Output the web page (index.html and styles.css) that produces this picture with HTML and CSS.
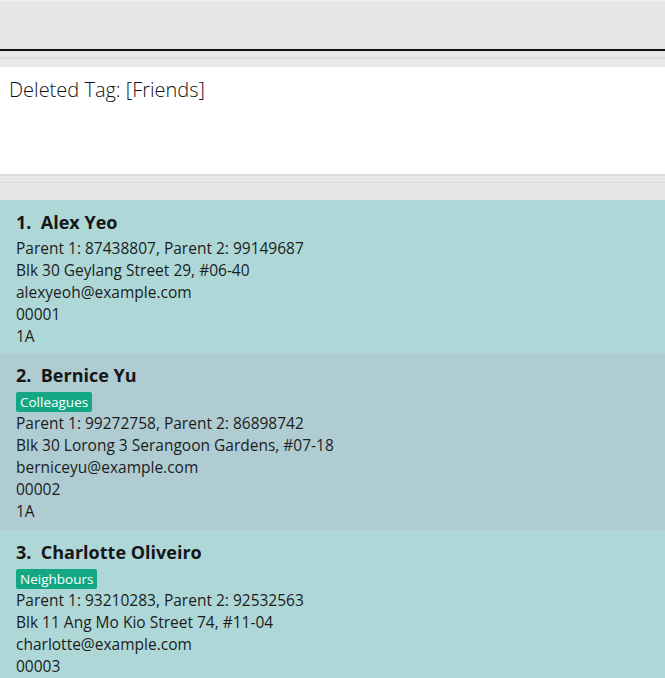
FILE: index.html
```html
<!DOCTYPE html>
<html>
<head>
<meta charset="utf-8">
<link rel="stylesheet" href="styles.css">
</head>
<body>
<div class="app">
  <div class="command-pane"></div>
  <div class="divider-top"><div class="hline"></div></div>
  <div class="result">Deleted Tag: [Friends]</div>
  <div class="divider-bottom"><div class="hline"></div></div>
  <div class="list">
    <div class="card odd">
      <div class="name">1.&nbsp;&nbsp;Alex Yeo</div>
      <div class="line">Parent 1: 87438807, Parent 2: 99149687</div>
      <div class="line">Blk 30 Geylang Street 29, #06-40</div>
      <div class="line">alexyeoh@example.com</div>
      <div class="line">00001</div>
      <div class="line">1A</div>
    </div>
    <div class="card even">
      <div class="name">2.&nbsp;&nbsp;Bernice Yu</div>
      <div class="tags"><span class="tag">Colleagues</span></div>
      <div class="line">Parent 1: 99272758, Parent 2: 86898742</div>
      <div class="line">Blk 30 Lorong 3 Serangoon Gardens, #07-18</div>
      <div class="line">berniceyu@example.com</div>
      <div class="line">00002</div>
      <div class="line">1A</div>
    </div>
    <div class="card odd">
      <div class="name">3.&nbsp;&nbsp;Charlotte Oliveiro</div>
      <div class="tags"><span class="tag">Neighbours</span></div>
      <div class="line">Parent 1: 93210283, Parent 2: 92532563</div>
      <div class="line">Blk 11 Ang Mo Kio Street 74, #11-04</div>
      <div class="line">charlotte@example.com</div>
      <div class="line">00003</div>
      <div class="line">1A</div>
    </div>
  </div>
</div>
</body>
</html>
```
FILE: styles.css
```css
html, body {
  margin: 0;
  padding: 0;
  overflow: hidden;
}
body {
  width: 665px;
  height: 678px;
  background: #e6e6e6;
  font-family: "Open Sans", "Noto Sans", sans-serif;
  color: #1c1c1c;
}
.app {
  display: flex;
  flex-direction: column;
  height: 678px;
}
.command-pane {
  flex: none;
  height: 48px;
  background: #e6e6e6;
  border-top: 1px solid #f0f0f0;
  border-bottom: 2px solid #111;
}
.divider-top {
  flex: none;
  height: 16px;
  background: #e9e9e9;
  padding-top: 6px;
  box-sizing: border-box;
}
.divider-top .hline {
  height: 2px;
  background: #dddddd;
}
.result {
  flex: none;
  height: 107px;
  background: #fff;
  padding: 10px 9px 0;
  box-sizing: border-box;
  font-size: 20px;
  font-weight: 300;
  line-height: 26px;
  color: #111;
}
.divider-bottom {
  flex: none;
  height: 26px;
  background: #e7e7e7;
  border-top: 2px solid #dcdcdc;
  box-sizing: border-box;
  padding-top: 6px;
}
.divider-bottom .hline {
  height: 1px;
  background: #dcdcdc;
}
.list {
  flex: 1;
  overflow: hidden;
}
.card {
  padding: 10px 16px 6px;
}
.card.odd { background: #aed8d8; }
.card.even { background: #afccd2; padding-bottom: 8px; }
.name {
  font-size: 18px;
  font-weight: 700;
  line-height: 24px;
  margin-bottom: 3px;
  color: #161616;
}
.tags {
  display: flex;
  height: 20px;
  margin-top: 5px;
  margin-bottom: 0;
}
.tag {
  background: #13a883;
  color: #fff;
  font-size: 13.5px;
  line-height: 20px;
  padding: 0 4px;
  border-radius: 2px;
}
.line {
  font-size: 15.5px;
  line-height: 22px;
}
```
